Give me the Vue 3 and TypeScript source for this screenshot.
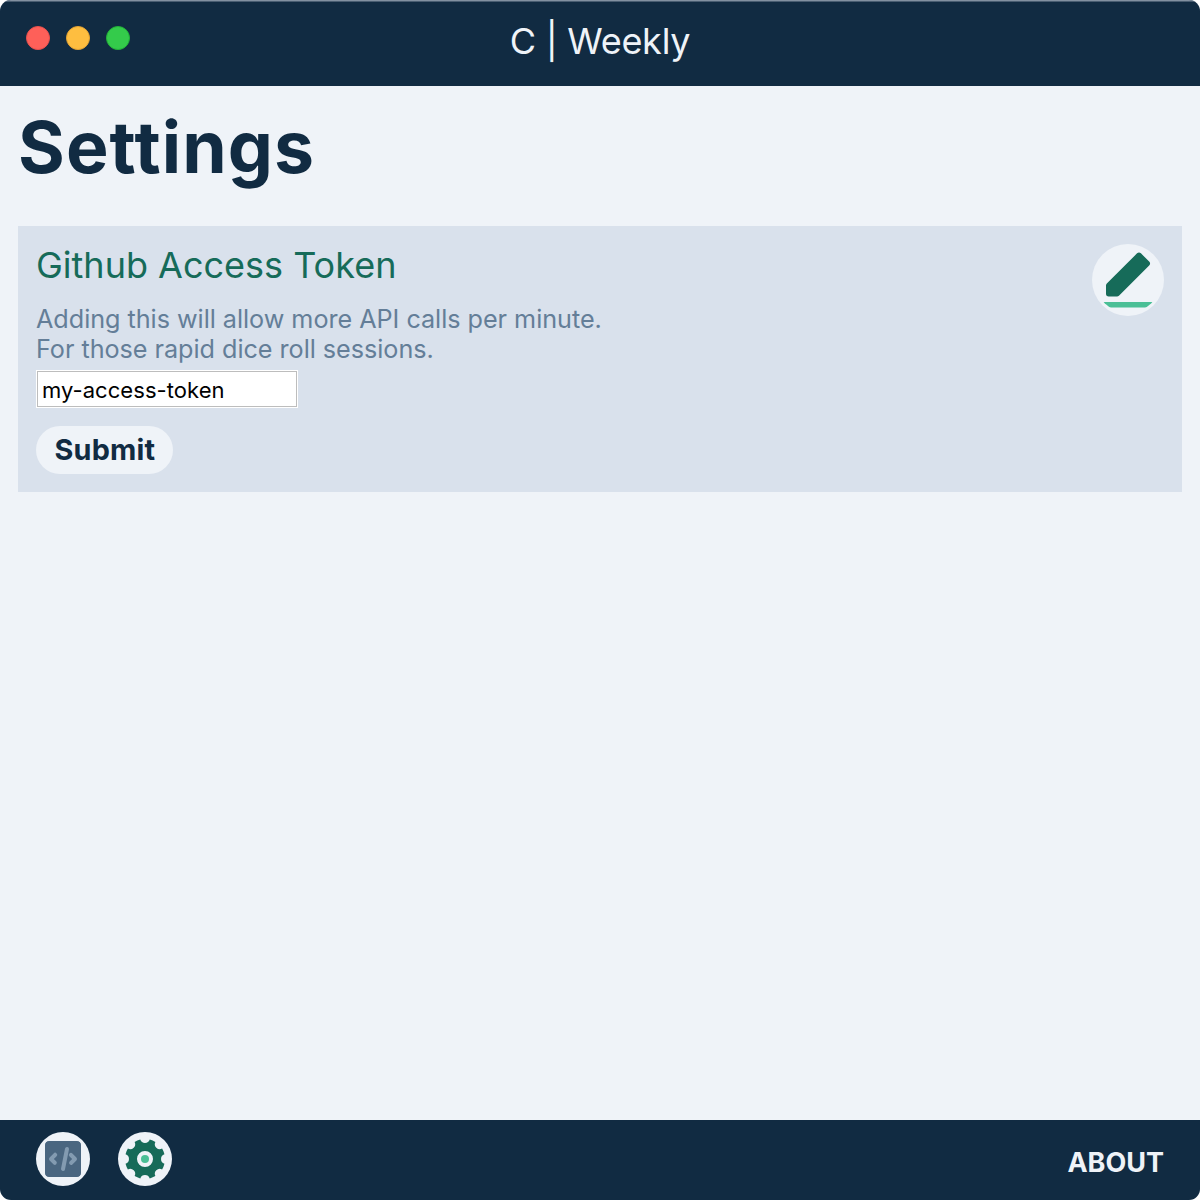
<script setup lang="ts">
import { ref } from 'vue'

const token = ref<string>('my-access-token')
const lights: string[] = ['close', 'minimize', 'zoom']
</script>

<template>
  <div class="window">
    <header class="titlebar">
      <div class="lights">
        <span v-for="l in lights" :key="l" class="light" :class="l"></span>
      </div>
      <span class="title">C | Weekly</span>
    </header>

    <main class="content">
      <h1>Settings</h1>
      <section class="card">
        <div class="body">
          <h2>Github Access Token</h2>
          <p>Adding this will allow more API calls per minute.<br />For those rapid dice roll sessions.</p>
          <input v-model="token" type="text" />
          <button class="submit" type="button">Submit</button>
        </div>
        <button class="round edit" type="button" aria-label="Edit">
          <svg viewBox="0 0 24 24">
            <path class="green" d="M4 14a1 1 0 0 1 .3-.7l11-11a1 1 0 0 1 1.4 0l3 3a1 1 0 0 1 0 1.4l-11 11a1 1 0 0 1-.7.3H5a1 1 0 0 1-1-1v-3z" />
            <rect class="mint" width="20" height="2" x="2" y="20" rx="1" />
          </svg>
        </button>
      </section>
    </main>

    <footer class="footer">
      <nav class="nav">
        <button class="round" type="button" aria-label="Code">
          <svg viewBox="0 0 24 24">
            <rect class="slate" width="18" height="18" x="3" y="3" rx="2" />
            <path class="haze" d="M8.7 13.3a1 1 0 0 1-1.4 1.4l-2-2a1 1 0 0 1 0-1.4l2-2a1 1 0 1 1 1.4 1.4L7.42 12l1.3 1.3zm6.6 0L16.58 12l-1.3-1.3a1 1 0 1 1 1.42-1.4l2 2a1 1 0 0 1 0 1.4l-2 2a1 1 0 0 1-1.42-1.4zm-2.32 3.9a1 1 0 1 1-1.96-.4l2-10a1 1 0 1 1 1.96.4l-2 10z" />
          </svg>
        </button>
        <button class="round" type="button" aria-label="Settings">
          <svg viewBox="0 0 24 24">
            <path class="green" d="M6.8 3.45c.87-.52 1.82-.92 2.83-1.17a2.5 2.5 0 0 0 4.74 0c1.01.25 1.96.65 2.82 1.17a2.5 2.5 0 0 0 3.36 3.36c.52.86.92 1.8 1.17 2.82a2.5 2.5 0 0 0 0 4.74c-.25 1.01-.65 1.96-1.17 2.82a2.5 2.5 0 0 0-3.36 3.36c-.86.52-1.8.92-2.82 1.17a2.5 2.5 0 0 0-4.74 0c-1.01-.25-1.96-.65-2.82-1.17a2.5 2.5 0 0 0-3.36-3.36 9.94 9.94 0 0 1-1.17-2.82 2.5 2.5 0 0 0 0-4.74c.25-1.01.65-1.96 1.17-2.82a2.5 2.5 0 0 0 3.36-3.36zM12 16a4 4 0 1 0 0-8 4 4 0 0 0 0 8z" />
            <circle class="mint" cx="12" cy="12" r="2" />
          </svg>
        </button>
      </nav>
      <a class="about">ABOUT</a>
    </footer>
  </div>
</template>

<style>
body {
  margin: 0;
  background: #fff;
}
</style>

<style scoped>
.window {
  display: flex;
  flex-direction: column;
  box-sizing: border-box;
  width: 1200px;
  height: 1200px;
  overflow: hidden;
  border-radius: 11px;
  background: #eff3f8;
  color: #112b42;
  font-family: Inter, "Liberation Sans", sans-serif;
}

.titlebar {
  display: grid;
  grid-template-columns: 1fr auto 1fr;
  box-sizing: border-box;
  flex: none;
  height: 86px;
  padding: 0 26px;
  background: #112b42;
  box-shadow: inset 0 1.5px 0 #8290a0;
  color: #eff3f8;
}

.lights {
  display: flex;
  gap: 16px;
  padding-top: 26px;
}

.light {
  box-sizing: border-box;
  width: 24px;
  height: 24px;
  border: 1px solid;
  border-radius: 50%;
}

.close {
  border-color: #e9504d;
  background: #fe6059;
}

.minimize {
  border-color: #e3a333;
  background: #febe40;
}

.zoom {
  border-color: #22b238;
  background: #34cb4b;
}

.title {
  padding-top: 19px;
  font-size: 36px;
  font-weight: 400;
  line-height: 44px;
  letter-spacing: -0.25px;
}

.content {
  flex: 1;
  padding: 18px 18px 0;
}

h1 {
  margin: 0 0 35px;
  font-size: 71.5px;
  font-weight: 700;
  line-height: 87px;
  letter-spacing: 1.1px;
}

.card {
  display: flex;
  justify-content: space-between;
  align-items: flex-start;
  box-sizing: border-box;
  height: 266px;
  padding: 18px;
  background: #d9e1ec;
}

.body {
  display: flex;
  flex-direction: column;
  align-items: flex-start;
}

h2 {
  margin: 0;
  color: #166b59;
  font-size: 36px;
  font-weight: 400;
  line-height: 43px;
}

p {
  margin: 17px 0 6px;
  color: #647e98;
  font-size: 25.2px;
  line-height: 30px;
  letter-spacing: -0.03px;
}

input {
  box-sizing: border-box;
  width: 262px;
  height: 38px;
  margin: 0;
  padding: 2px 5px 0;
  border: 1px solid #fff;
  border-radius: 0;
  outline: 1px solid #bdbdbd;
  outline-offset: -2px;
  background: #fff;
  color: #000;
  font: 400 22px Inter, "Liberation Sans", sans-serif;
  letter-spacing: 0.05px;
}

.submit {
  height: 48px;
  margin: 18px 0 0;
  padding: 0 18px 0 18.5px;
  border: 0;
  border-radius: 24px;
  background: #eff3f8;
  color: #112b42;
  font: 700 28.8px/48px Inter, "Liberation Sans", sans-serif;
  letter-spacing: 0.2px;
}

.round {
  display: flex;
  align-items: center;
  justify-content: center;
  flex: none;
  width: 54px;
  height: 54px;
  margin: 0;
  padding: 0;
  border: 0;
  border-radius: 50%;
  background: #eff3f8;
}

.round svg {
  display: block;
  width: 48px;
  height: 48px;
  overflow: hidden;
  border-radius: 50%;
}

.edit {
  width: 72px;
  height: 72px;
}

.edit svg {
  width: 66px;
  height: 66px;
}

.green {
  fill: #166b59;
}

.mint {
  fill: #4abf96;
}

.slate {
  fill: #4a6680;
}

.haze {
  fill: #839bb1;
}

.footer {
  display: flex;
  justify-content: space-between;
  box-sizing: border-box;
  flex: none;
  height: 80px;
  padding: 12px 36px 0;
  background: #112b42;
}

.nav {
  display: flex;
  gap: 28px;
}

.about {
  padding-top: 14px;
  color: #eff3f8;
  font-size: 27px;
  font-weight: 700;
  line-height: 34px;
}
</style>
